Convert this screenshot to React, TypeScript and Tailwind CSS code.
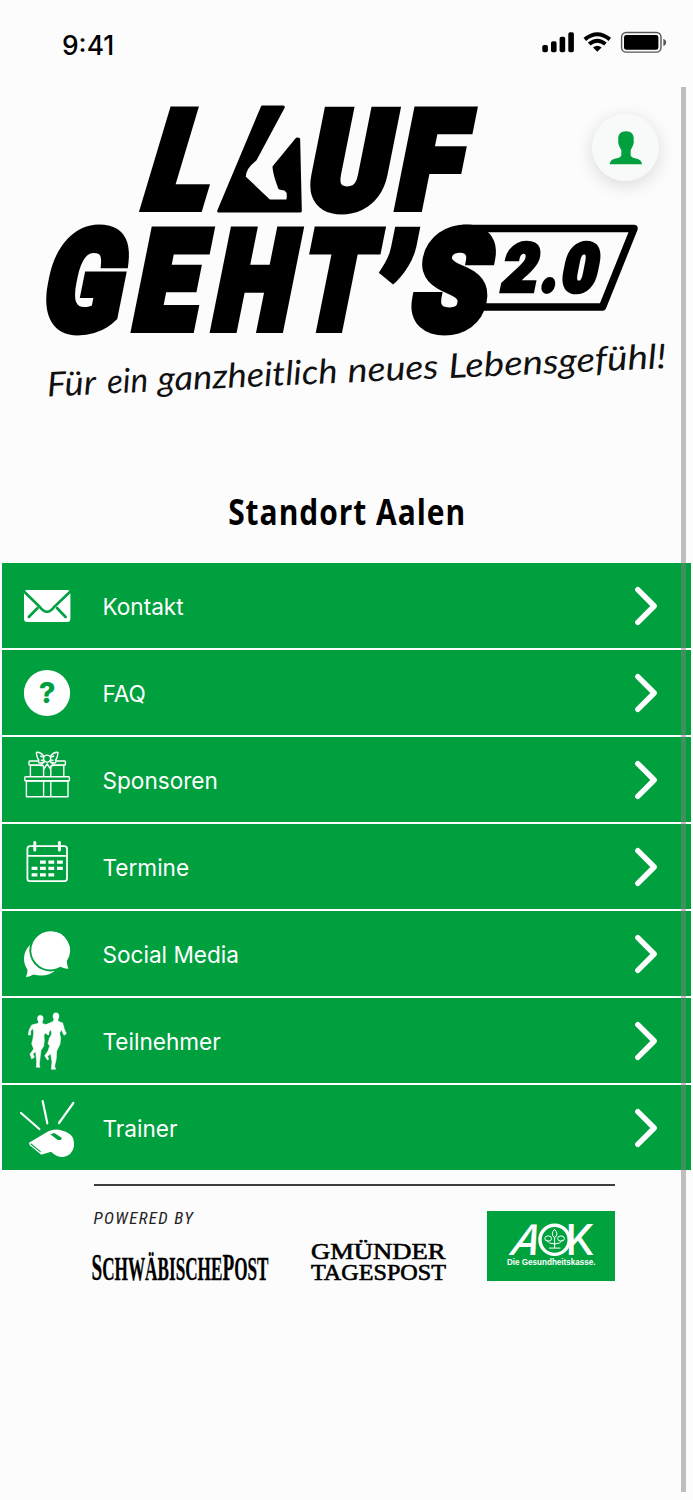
import React from "react";

type Ink = [left: number, right: number, top: number, bottom: number];

// Ink boxes of the heavy Roboto glyphs at 100px.
const INK: Record<string, Ink> = {
  L: [5, 53, 71, 0],
  U: [4.5, 62, 71, 1],
  F: [5, 53, 71, 0],
  G: [3.5, 64, 72, 1],
  E: [5, 54.5, 71, 0],
  H: [5, 65, 71, 0],
  T: [1.5, 61.5, 71, 0],
  S: [2.5, 60, 72, 1],
  "’": [3.5, 20, 75, -48],
  "2": [2.5, 54, 72, 0],
  "0": [4, 54, 72, 1],
  ".": [5, 24, 16, 0],
};

function Glyph({ ch, x, w, top, bottom, tan = 0.2, base, s = 7.5 }: {
  ch: string; x: number; w: number; top: number; bottom: number; tan?: number; base?: number; s?: number;
}) {
  const [l, r, t, b] = INK[ch];
  const sx = w / (r - l + s);
  const sy = (bottom - top) / (t + b + s);
  const ty = bottom - (b + s / 2) * sy;
  const tx = x - (l - s / 2) * sx + tan * ((base ?? bottom) - ty);
  return (
    <text
      transform={`matrix(${sx} 0 ${-tan * sy} ${sy} ${tx} ${ty})`}
      className="font-['Roboto',sans-serif] text-[100px] font-black"
      fill="#000"
      stroke="#000"
      strokeWidth={s}
      strokeLinejoin="miter"
      strokeMiterlimit="2"
    >
      {ch}
    </text>
  );
}

function BrandLogo() {
  return (
    <svg viewBox="0 80 693 350" className="block h-[350px] w-full" aria-label="Lauf geht's 2.0">
      <Glyph ch="L" x={138.5} w={64} top={107} bottom={212.5} tan={0.3} />
      <path
        transform="translate(30 90) scale(.33333)"
        d="M697 51 L760 51 L676 208 Q642 234 643 262 L718 333 L773 333 Q779 306 766 298 L749 294 Q733 252 732 231 L801 147 L806 148 L811 363 L566 363 Z"
        fill="#000" stroke="#000" strokeWidth="9" strokeLinejoin="round"
      />
      <Glyph ch="U" x={302.5} w={78} top={107} bottom={214.5} />
      <Glyph ch="F" x={393} w={64} top={107} bottom={212.5} />
      <Glyph ch="G" x={37} w={77.5} top={225} bottom={336} />
      <Glyph ch="E" x={130} w={64} top={227} bottom={333.5} />
      <Glyph ch="H" x={209} w={74} top={227} bottom={333.5} />
      <Glyph ch="T" x={293} w={72} top={227} bottom={333.5} />
      <Glyph ch="’" x={369} w={31} top={227} bottom={285} base={333} />
      <Glyph ch="S" x={404} w={77} top={225} bottom={336} />
      <path d="M462 228.6 H634 L602.5 307 H484" fill="none" stroke="#000" strokeWidth="7.5" strokeLinejoin="round" />
      <Glyph ch="2" x={498} w={36} top={241} bottom={293.5} s={7} />
      <Glyph ch="." x={539.5} w={14} top={277} bottom={293.5} s={7} />
      <Glyph ch="0" x={558.5} w={35} top={241} bottom={294.5} s={8} />
      <g className="font-['Lato',sans-serif] text-[34px] italic" fill="#111">
        <text transform="translate(47.5 396.5) rotate(-2.6)" textLength="49" lengthAdjust="spacingAndGlyphs">Für</text>
        <text transform="translate(107.5 393.5) rotate(-2.6)" textLength="41" lengthAdjust="spacingAndGlyphs">ein</text>
        <text transform="translate(158 391) rotate(-2.6)" textLength="180" lengthAdjust="spacingAndGlyphs">ganzheitlich</text>
        <text transform="translate(348 382.5) rotate(-2.6)" textLength="91" lengthAdjust="spacingAndGlyphs">neues</text>
        <text transform="translate(449 378) rotate(-2.6)" textLength="218" lengthAdjust="spacingAndGlyphs">Lebensgefühl!</text>
      </g>
    </svg>
  );
}

function StatusIcons() {
  return (
    <svg viewBox="540 28 128 28" className="h-7 w-32">
      <g fill="#000">
        <rect x="542.3" y="45" width="5.6" height="7.3" rx="1.8" />
        <rect x="551" y="41.3" width="5.6" height="11" rx="1.8" />
        <rect x="559.6" y="36.8" width="5.6" height="15.5" rx="1.8" />
        <rect x="568.3" y="32.3" width="5.6" height="20" rx="1.8" />
        <path d="M597.3 51.8 L593 47.4 Q597.3 44 601.6 47.4 Z" />
        <rect x="624" y="35" width="34.4" height="14.8" rx="2.4" />
        <path d="M663.4 38.8 Q666.2 40.2 666.2 42.4 Q666.2 44.6 663.4 46 Z" fill="#555" />
      </g>
      <g fill="none" stroke="#000" strokeWidth="4">
        <path d="M584.8 39.4 Q597.3 29.1 609.8 39.4" />
        <path d="M589.2 44 Q597.3 37.4 605.4 44" />
      </g>
      <rect x="621.6" y="32.5" width="39.4" height="19.6" rx="4.6" fill="none" stroke="#555" strokeWidth="1.4" />
    </svg>
  );
}

function Icon({ y, children }: { y: number; children: React.ReactNode }) {
  return (
    <svg viewBox={`2 ${y} 100 85`} className="h-[85px] w-[100px] shrink-0" fill="#fff">
      {children}
    </svg>
  );
}

const GREEN = "#00a03f";

const items: { label: string; icon: React.ReactNode }[] = [
  {
    label: "Kontakt",
    icon: (
      <Icon y={563}>
        <rect x="24" y="590" width="46.4" height="32" rx="3.2" />
        <g fill="none" stroke={GREEN} strokeWidth="2.6" strokeLinecap="round">
          <path d="M24 591.5 L39.5 606.5 Q47 617 54.5 606.5 L70.4 591.5" />
          <path d="M37.6 608 L28.8 617 M57 608 L65.6 617" />
        </g>
      </Icon>
    ),
  },
  {
    label: "FAQ",
    icon: (
      <Icon y={650}>
        <circle cx="47" cy="693" r="23.1" />
        <text x="47.2" y="703.4" textAnchor="middle" fill={GREEN} className="font-['Inter',sans-serif] text-[29px] font-extrabold">?</text>
      </Icon>
    ),
  },
  {
    label: "Sponsoren",
    icon: (
      <Icon y={737}>
        <g fill={GREEN} stroke="#fff" strokeWidth="1.4" strokeLinejoin="round">
          <rect x="26.4" y="781" width="41.6" height="15.8" />
          <rect x="30.4" y="765" width="33.4" height="12" />
          <path d="M43.6 765 V797 M50.8 765 V797" />
          <rect x="24.8" y="776.8" width="44.6" height="3.9" rx=".8" />
          <rect x="29" y="761" width="36.4" height="4" rx=".8" />
          <path d="M45 761 L40.5 765.5 L43.3 765.6 L44 768.8 L47.2 763.8 L50.4 768.8 L51 765.6 L54 765.5 L49.5 761 Z" />
          <path d="M43.8 756.2 Q40 751.5 36.4 752.4 Q36.8 758 38.8 760 Q37.8 763 40 763 Q43.4 762.8 44.8 761.2 Z" />
          <path d="M50.4 756.2 Q54.2 751.5 58 752.4 Q57.4 758 55.6 760 Q56.6 763 54.4 763 Q50.8 762.8 49.6 761.2 Z" />
          <path d="M44 757.4 L40.2 756 M44 760 L40.8 760.4 M50.4 757.4 L54.2 756 M50.4 760 L53.6 760.4" />
          <circle cx="47.1" cy="758.6" r="3.5" />
        </g>
      </Icon>
    ),
  },
  {
    label: "Termine",
    icon: (
      <Icon y={824}>
        <g fill="none" stroke="#fff" strokeWidth="1.8">
          <rect x="27.4" y="846.2" width="39.6" height="35" rx="2.6" />
          <path d="M27.4 855.8 H67" />
        </g>
        <path d="M34.8 842.6 V850 M59.4 842.6 V850" stroke="#fff" strokeWidth="3" strokeLinecap="round" />
        <path d="M40 860.4h5.8v3.3h-5.8z M48.4 860.4h5.8v3.3h-5.8z M57 860.4h5.8v3.3h-5.8z M31.6 866.8h5.8v3.3h-5.8z M40 866.8h5.8v3.3h-5.8z M48.4 866.8h5.8v3.3h-5.8z M57 866.8h5.8v3.3h-5.8z M31.6 873.3h5.8v3.3h-5.8z M40 873.3h5.8v3.3h-5.8z M48.4 873.3h5.8v3.3h-5.8z" />
      </Icon>
    ),
  },
  {
    label: "Social Media",
    icon: (
      <Icon y={911}>
        <path d="M24 958.5 A18.6 18.6 0 0 1 42.6 940 A18.6 18.6 0 0 1 56 970 Q47 978 33.5 974.6 Q29 977.4 26 977 Q27.8 973.4 27.4 969.4 Q24 965 24 958.5 Z" />
        <path
          d="M51 931.2 A19.2 19.2 0 0 1 66.8 961 Q67 966 68.4 968.8 Q64.6 969 60.4 966.8 A19.2 19.2 0 1 1 51 931.2 Z"
          stroke={GREEN} strokeWidth="3.6" paintOrder="stroke"
        />
      </Icon>
    ),
  },
  {
    label: "Teilnehmer",
    icon: (
      <Icon y={998}>
        <g transform="translate(15 1005) scale(.33333)" stroke="#fff" strokeWidth="1.5" strokeLinejoin="round">
          <ellipse cx="76" cy="41" rx="8.5" ry="10" />
          <path d="M71 48 L81 48 L83 56 L100 60 L102 90 L90 84 L87 92 L88 108 L86 124 L78 136 L75 160 L73 178 L75 187 L64 187 L65 170 L62 140 L54 146 L58 157 L50 162 L45 147 L56 132 L50 116 L54 100 L56 84 L54 70 L47 78 L47 90 L40 90 L42 76 L50 60 L70 55 Z" />
          <ellipse cx="123" cy="34" rx="9" ry="10.5" />
          <path d="M118 42 L128 42 L130 49 L143 54 L148 72 L154 86 L147 91 L139 74 L134 84 L137 100 L135 118 L125 138 L124 160 L119 184 L122 193 L109 193 L111 170 L107 146 L98 154 L101 163 L97 165 L89 152 L99 138 L104 122 L99 116 L103 100 L110 88 L108 74 L102 80 L97 90 L93 76 L95 58 L113 50 Z" />
        </g>
      </Icon>
    ),
  },
  {
    label: "Trainer",
    icon: (
      <Icon y={1085}>
        <g transform="translate(15 1005) scale(.33333)">
          <path d="M18 324 L73 372 M83 288 L97 355 M175 294 L132 354" stroke="#fff" strokeWidth="6.5" strokeLinecap="round" />
          <path d="M42 413 L100 379 Q122 369 142 377 Q164 383 171 394 Q178 404 177 424 Q172 452 144 456 Q126 457 108 440 L79 449 L44 421 Z" />
          <path d="M106 388 L118 384 L141 399 L137 405 L128 405 Z" fill={GREEN} />
          <path d="M48 417 L76 440" stroke={GREEN} strokeWidth="3.4" strokeLinecap="round" />
        </g>
      </Icon>
    ),
  },
];

function MenuRow({ label, icon }: { label: string; icon: React.ReactNode }) {
  return (
    <li className="flex h-[85px] items-center bg-[#00a03f]">
      {icon}
      <span className="flex-1 pt-[3px] pl-[0.5px] font-['Inter',sans-serif] text-[22.6px] text-white">{label}</span>
      <svg viewBox="632 563 59 85" className="h-[85px] w-[59px] shrink-0" fill="none" stroke="#fff" strokeWidth="5.4">
        <path d="M637.8 589.6 L654.2 606 L637.8 622.4" strokeLinecap="round" strokeLinejoin="round" />
      </svg>
    </li>
  );
}

function AokLogo() {
  return (
    <svg viewBox="487 1211.5 128 70" className="mt-[25px] h-[70px] w-32 bg-[#00a23e]">
      <g className="font-['Inter',sans-serif] text-[42px] font-medium" fill="#fff">
        <text transform="matrix(.96 0 -.4 1 507.5 1255.5)">A</text>
        <text transform="matrix(1 0 0 1 565.5 1255.5)">K</text>
      </g>
      <circle cx="554.6" cy="1240.3" r="14.6" fill="#00a23e" stroke="#fff" strokeWidth="3.4" />
      <g fill="none" stroke="#fff" strokeWidth="1">
        <path d="M554.6 1248.5 V1238 M549 1248.6 H560.4 M554.6 1244.5 Q549 1244.4 546.4 1240.6 M554.6 1244.5 Q560.2 1244.4 562.8 1240.6" />
        <path d="M554.6 1238.4 Q550 1234.6 554.6 1229.8 Q559.2 1234.6 554.6 1238.4 Z" />
        <ellipse cx="548.2" cy="1239" rx="3.4" ry="2.6" />
        <ellipse cx="561" cy="1239" rx="3.4" ry="2.6" />
      </g>
      <text x="507" y="1265.3" textLength="88.5" lengthAdjust="spacingAndGlyphs" fill="#fff" className="font-['Liberation_Sans',Arial,sans-serif] text-[8.6px] font-bold">
        Die Gesundheitskasse.
      </text>
    </svg>
  );
}

export default function App() {
  return (
    <div className="relative h-[1500px] w-[693px] overflow-hidden bg-[#fcfcfc] text-black">
      <header className="flex h-20 items-start justify-between pt-7 pr-[25px] pl-[62px]">
        <span className="pt-[1px] font-['Inter',sans-serif] text-[26.4px] leading-8 font-[550]">9:41</span>
        <StatusIcons />
      </header>

      <BrandLogo />

      <div className="flex h-[133px] items-start justify-center pt-[56px] pl-[2px]">
        <h1 className="scale-x-82 font-['Open_Sans',sans-serif] text-[36.5px] leading-[50px] font-bold tracking-[1.2px] whitespace-nowrap">
          Standort Aalen
        </h1>
      </div>

      <ul className="mx-[2px] flex flex-col gap-[2px] bg-white">
        {items.map((item) => (
          <MenuRow key={item.label} {...item} />
        ))}
      </ul>

      <footer className="ml-[91px] w-[524px] pt-[14px]">
        <div className="ml-[3px] h-[2px] w-[521px] bg-[#3a3f3c]" />
        <div className="flex items-start">
          <div className="w-[178px] pt-[22px]">
            <p className="pl-[2.5px] font-['Roboto_Condensed',sans-serif] text-[17px] leading-5 tracking-[1.35px] text-[#222] italic">POWERED BY</p>
            <svg viewBox="91 1240 178 54" className="mt-[12px] h-[54px] w-[178px] overflow-visible">
              <text x="91.5" y="1280" fill="#000" stroke="#000" strokeWidth=".3" className="font-['Liberation_Serif',serif] text-[34px] font-bold" textLength="177" lengthAdjust="spacingAndGlyphs">
                <tspan className="text-[38px]">S</tspan>CHWÄBISCHE<tspan className="text-[38px]">P</tspan>OST
              </text>
            </svg>
          </div>
          <svg viewBox="310 1236 138 48" className="mt-[50px] ml-[41px] h-[48px] w-[138px] overflow-visible">
            <g className="font-['Liberation_Serif',serif] text-[22.5px]" fill="#000" stroke="#000" strokeWidth=".6">
              <text x="311" y="1259" textLength="134.5" lengthAdjust="spacingAndGlyphs">GMÜNDER</text>
              <text x="311" y="1279.5" textLength="135" lengthAdjust="spacingAndGlyphs">TAGESPOST</text>
            </g>
          </svg>
          <div className="ml-auto">
            <AokLogo />
          </div>
        </div>
      </footer>

      <button aria-label="Profil" className="absolute top-[113.5px] left-[592px] flex size-[67px] items-center justify-center rounded-full bg-[#f8faf9] shadow-[0_4px_18px_rgba(0,0,0,0.14)]">
        <svg viewBox="592 113.5 67 67" className="size-[67px]">
          <path
            transform="translate(350 90) scale(.33333)"
            d="M828 122 C844 122 853 131 851 148 C853 162 847 168 842 180 L842 195 Q845 202 858 204 Q875 208 876 221 L779 221 Q780 208 797 204 Q811 202 814 195 L814 180 C809 168 803 162 805 148 C803 131 812 122 828 122 Z"
            fill="#00a03f"
          />
        </svg>
      </button>
      <div className="absolute top-[87px] left-[681px] h-[1405px] w-[5px] bg-[#7f7f7f]/50" />
    </div>
  );
}
